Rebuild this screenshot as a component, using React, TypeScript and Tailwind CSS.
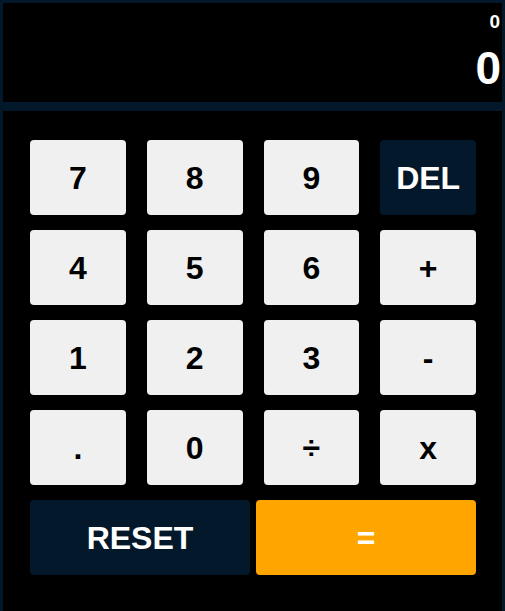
import React from "react";

const light = "bg-[#f0f0f0] text-black";
const dark = "bg-[#03192b] text-white";

function Key({ label, cls }: { label: string; cls: string }) {
  return (
    <button
      className={`h-[75px] rounded-[4px] flex items-center justify-center text-[32px] font-bold ${cls}`}
    >
      {label}
    </button>
  );
}

export default function App() {
  const keys: [string, string][] = [
    ["7", light], ["8", light], ["9", light], ["DEL", dark],
    ["4", light], ["5", light], ["6", light], ["+", light],
    ["1", light], ["2", light], ["3", light], ["-", light],
    [".", light], ["0", light], ["÷", light], ["x", light],
  ];
  return (
    <div
      className="w-full h-[611px] bg-[#03192b] px-[3px] pt-[3px] flex flex-col overflow-hidden"
      style={{ fontFamily: '"Liberation Sans", Arial, sans-serif' }}
    >
      <div className="h-[99px] bg-black flex flex-col items-end text-white font-bold">
        <div className="text-[19px] leading-none mt-[9px] pr-[2px]">0</div>
        <div className="text-[46px] leading-none mt-[14px] pr-[1px]">0</div>
      </div>
      <div className="flex-1 mt-[9px] bg-black pt-[29px] pl-[27px] pr-[26px]">
        <div className="grid grid-cols-4 gap-x-[21px] gap-y-[15px]">
          {keys.map(([k, c]) => (
            <Key key={k} label={k} cls={c} />
          ))}
        </div>
        <div className="flex gap-[6px] mt-[15px]">
          <button className="flex-1 h-[75px] rounded-[4px] bg-[#03192b] text-white text-[32px] font-bold flex items-center justify-center">
            RESET
          </button>
          <button className="flex-1 h-[75px] rounded-[4px] bg-[#ffa500] text-white text-[32px] font-bold flex items-center justify-center">
            =
          </button>
        </div>
      </div>
    </div>
  );
}
